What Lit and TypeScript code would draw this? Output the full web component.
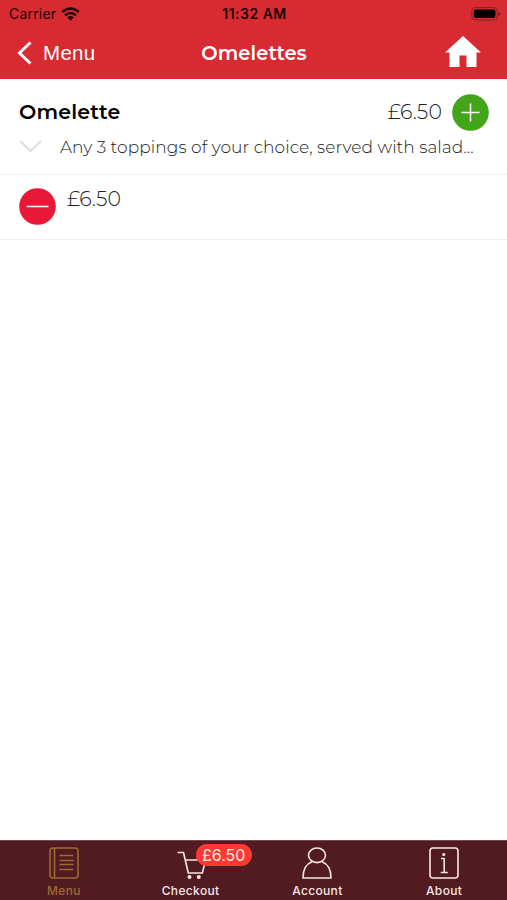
import { LitElement, html, css, svg } from "lit";
import { customElement } from "lit/decorators.js";

const menuIcon = svg`<rect x="1" y="1" width="28" height="30" rx="3"/><path d="M5.500 1v30M10.500 8.500h14M10.500 13.500h14M10.500 17.500h14M10.500 22.500h14"/>`;
const cartIcon = svg`<path d="M1.500 5.500h6l4.800 20.500h14L29.700 13H9.500"/><g class="dots"><circle cx="13.500" cy="30" r="2"/><circle cx="22.800" cy="30" r="2"/></g>`;
const accountIcon = svg`<ellipse cx="15" cy="8.300" rx="8.500" ry="7.300"/><path d="M10 14.800C4 17 1 22 1 31h28c0-9-3-14-9-16.200"/>`;
const aboutIcon = svg`<rect x="1" y="1" width="28" height="30" rx="3"/><path d="M12 11.500h3.200v13.800M11.800 25.500h7"/><g class="dots"><circle cx="14.800" cy="7.500" r="1.600"/></g>`;

@customElement("app-root")
export class AppRoot extends LitElement {
  static styles = css`
    :host {
      display: flex;
      flex-direction: column;
      height: 900px;
      background: #fff;
      color: #000;
      font-family: Montserrat, Inter, sans-serif;
      overflow: hidden;
    }
    * { box-sizing: border-box; }
    svg { display: block; flex: none; fill: none; overflow: visible; }
    span, .name, .title, .desc { white-space: nowrap; }
    header { background: #d72b31; height: 79px; flex: none; }
    .status {
      height: 27px;
      display: grid;
      grid-template-columns: 1fr auto 1fr;
      align-items: center;
      padding: 1px 7px 0 9px;
      font: 14px/26px Inter, sans-serif;
      color: #200406;
    }
    .carrier { display: flex; align-items: center; gap: 5px; letter-spacing: 0.2px; }
    .carrier svg { margin-bottom: 1px; }
    .time { font-weight: 600; letter-spacing: 0.5px; }
    .battery { justify-self: end; }
    .nav {
      height: 52px;
      display: grid;
      grid-template-columns: 1fr auto 1fr;
      align-items: center;
      padding: 0 26px 0 17px;
      color: #fff;
    }
    .back { display: flex; align-items: center; gap: 11px; font: 20.500px/24px "Liberation Sans", sans-serif; letter-spacing: 0.3px; }
    .back svg { margin-bottom: 1px; }
    .title { font-size: 19.500px; font-weight: 600; letter-spacing: 0.05px; margin-left: 10px; }
    .home { justify-self: end; margin-bottom: 4px; }
    .item { height: 96px; border-bottom: 1px solid #f0f0f0; padding: 15px 18px 0 19px; flex: none; }
    .line { display: flex; align-items: center; height: 36px; }
    .name { font-size: 20.500px; font-weight: 600; flex: 1; letter-spacing: 0.2px; padding-bottom: 1px; }
    .price { font-size: 20.500px; font-weight: 300; color: #222; letter-spacing: 0.1px; }
    .line .price { margin-right: 10px; padding-bottom: 1px; }
    .detail { display: flex; align-items: center; height: 32px; gap: 18px; }
    .desc { font-size: 17px; font-weight: 300; color: #222; letter-spacing: 0.060px; padding-top: 2px; }
    .added { height: 65px; border-bottom: 1px solid #f0f0f0; padding: 13px 19px; display: flex; gap: 11px; flex: none; }
    .added .price { line-height: 22px; }
    nav {
      margin-top: auto;
      height: 60px;
      flex: none;
      background: #521b21;
      border-top: 1px solid #75494d;
      display: grid;
      grid-template-columns: repeat(4, 1fr);
      color: #f7e7e7;
    }
    .tab { position: relative; display: flex; flex-direction: column; align-items: center; padding: 6px 0 0 1px; }
    .tab svg { stroke: currentColor; stroke-width: 1.600; stroke-linejoin: round; }
    .tab .dots { fill: currentColor; stroke: none; }
    .tab.active { color: #9c6a34; }
    .label { font: 500 12px/16px Inter, sans-serif; margin-top: 4px; letter-spacing: 0.35px; }
    .badge {
      position: absolute;
      left: 69px;
      top: 3px;
      width: 56px;
      height: 22px;
      border-radius: 11px;
      background: #fd3a31;
      color: #ffe9e7;
      font: 16px/22px Inter, sans-serif;
      text-align: center;
    }
  `;

  private tab(label: string, icon: unknown, active = false, badge = "") {
    return html`<div class="tab ${active ? "active" : ""}">
      <svg width="30" height="32" viewBox="0 0 30 32">${icon}</svg>
      <span class="label">${label}</span>
      ${badge ? html`<span class="badge">${badge}</span>` : ""}
    </div>`;
  }

  render() {
    return html`
      <header>
        <div class="status">
          <div class="carrier"><span>Carrier</span>
            <svg width="19" height="14" viewBox="0 0 19 14" stroke="#200406" stroke-width="2.500">
              <path d="M1.200 5Q9.500-2 17.800 5M4 8.200Q9.500 3.700 15 8.200"/>
              <path d="M6.200 10.300Q9.500 7.500 12.800 10.300L9.500 13.700Z" fill="#200406" stroke="none"/>
            </svg>
          </div>
          <span class="time">11:32 AM</span>
          <svg class="battery" width="29" height="14" viewBox="0 0 29 14">
            <rect x=".8" y=".6" width="25.400" height="12.400" rx="3.500" stroke="#8e1d22" stroke-width="1"/>
            <rect x="2.800" y="2.500" width="21.600" height="8.600" rx="2" fill="#000"/>
            <path d="M27.500 5v4q1.500-.5 1.500-2t-1.500-2" fill="#701519"/>
          </svg>
        </div>
        <div class="nav">
          <div class="back">
            <svg width="15" height="24" viewBox="0 0 15 24" stroke="#fff" stroke-width="3"><path d="M13.500 1.500 2.500 12l11 10.500"/></svg>
            <span>Menu</span>
          </div>
          <div class="title">Omelettes</div>
          <svg class="home" width="36" height="31" viewBox="0 0 36 31"><path d="M18 0 36 16.500h-4.500V31h-10V19.500h-7V31h-10V16.500H0Z" fill="#fff"/></svg>
        </div>
      </header>
      <section class="item">
        <div class="line">
          <div class="name">Omelette</div>
          <span class="price">£6.50</span>
          <svg width="37" height="37" viewBox="0 0 37 37"><circle cx="18.500" cy="18.500" r="18.300" fill="#43a51a"/><path d="M9.500 18.500h18M18.500 9.500v18" stroke="#fff" stroke-width="1.500"/></svg>
        </div>
        <div class="detail">
          <svg width="23" height="13" viewBox="0 0 23 13" stroke="#dedede" stroke-width="2"><path d="m1 1 10.500 10L22 1"/></svg>
          <div class="desc">Any 3 toppings of your choice, served with salad...</div>
        </div>
      </section>
      <section class="added">
        <svg width="37" height="37" viewBox="0 0 37 37"><circle cx="18.500" cy="18.500" r="18.300" fill="#e91838"/><path d="M7.500 18.500h22" stroke="#fff" stroke-width="1.500"/></svg>
        <span class="price">£6.50</span>
      </section>
      <nav>
        ${this.tab("Menu", menuIcon, true)}
        ${this.tab("Checkout", cartIcon, false, "£6.50")}
        ${this.tab("Account", accountIcon)}
        ${this.tab("About", aboutIcon)}
      </nav>
    `;
  }
}
